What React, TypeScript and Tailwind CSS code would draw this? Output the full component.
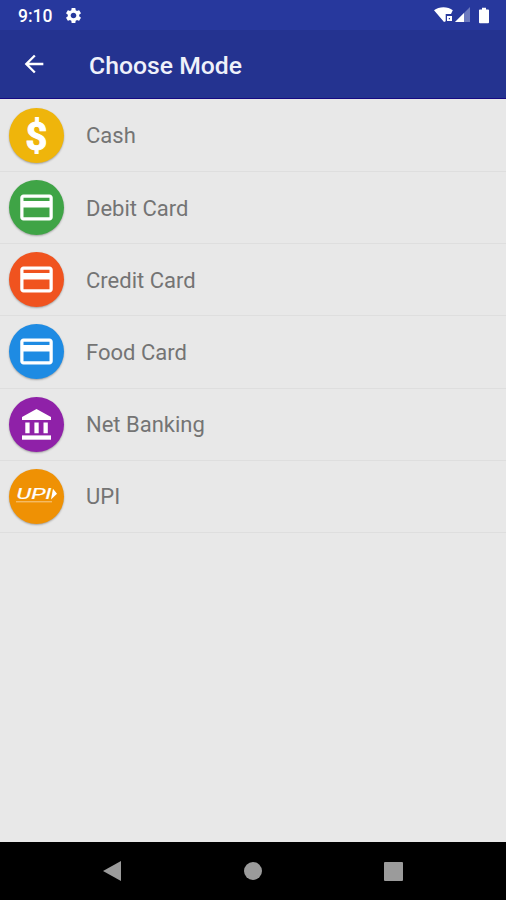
import type { ReactNode } from "react";
import { MdArrowBack, MdPayment, MdSettings } from "react-icons/md";

type Mode = {
  name: string;
  color: string;
  icon: ReactNode;
};

const BankIcon = () => (
  <svg width="29" height="31" viewBox="0 0 29 31" fill="currentColor">
    <path d="M14.5 0 29 8v3H0V8z" />
    <path d="M3.3 13.4h4.3v10.8H3.3zM12.4 13.4h4.3v10.8h-4.3zM21.5 13.4h4.3v10.8h-4.3z" />
    <path d="M0 26.4h29v4.3H0z" />
  </svg>
);

const UpiLogo = () => (
  <svg width="42" height="18" viewBox="0 0 42 18" fill="#fff">
    <text
      x="0.5"
      y="12"
      fontFamily="Roboto, sans-serif"
      fontStyle="italic"
      fontWeight="400"
      fontSize="14"
      textLength="35"
      lengthAdjust="spacingAndGlyphs"
      stroke="#fff"
      strokeWidth="0.2"
    >
      UPI
    </text>
    <path d="M37 1.8 41 6.8 35 12.4z" />
    <path d="M0 14.8h36" stroke="#fff" strokeWidth="0.9" opacity="0.6" />
  </svg>
);

const modes: Mode[] = [
  {
    name: "Cash",
    color: "bg-[#efb50b]",
    icon: (
      <span className="font-bold text-[38px] leading-none pt-[3px] [-webkit-text-stroke:1px_white]">
        $
      </span>
    ),
  },
  { name: "Debit Card", color: "bg-[#3fa446]", icon: <MdPayment size={39} /> },
  { name: "Credit Card", color: "bg-[#f0531f]", icon: <MdPayment size={39} /> },
  { name: "Food Card", color: "bg-[#1e8be3]", icon: <MdPayment size={39} /> },
  { name: "Net Banking", color: "bg-[#8f21a8]", icon: <BankIcon /> },
  { name: "UPI", color: "bg-[#ef9104]", icon: <UpiLogo /> },
];

function StatusBar() {
  return (
    <div className="h-[30px] shrink-0 bg-[#27389d] flex items-center pl-[18px] pr-[17px] text-white">
      <span className="pt-[3px] text-[17.5px] font-medium leading-none">9:10</span>
      <MdSettings size={19} className="ml-[12px] mt-px" />

      <div className="ml-auto flex items-center">
        {/* Wifi */}
        <svg width="20" height="16" viewBox="0 0 20 16" fill="#fff">
          <path d="M0 3.2C5-.9 14-.9 18.8 3.2L17 7h-5.3v7.2L10 15z" />
          <path d="M13 9h5v5h-5zm1.8 2v1.2H16V11z" fillRule="evenodd" />
        </svg>
        {/* Sinyal */}
        <svg width="15" height="16" viewBox="0 0 15 16" className="ml-[1px]">
          <path d="M15 0v15H0z" fill="#6c79be" />
          <path d="M9 6v9H0z" fill="#fff" />
        </svg>
        {/* Baterai */}
        <svg width="10" height="17" viewBox="0 0 11 17" fill="#fff" className="ml-[9px]">
          <path d="M3.3 0h4.4v1.8H10q1 0 1 1V16q0 1-1 1H1q-1 0-1-1V2.8q0-1 1-1h2.3z" />
        </svg>
      </div>
    </div>
  );
}

function AppBar() {
  return (
    <header className="h-[69px] shrink-0 bg-[#243390] border-b border-[#160a82] flex items-center pl-[20px] text-white">
      <button className="block" aria-label="Back">
        <MdArrowBack size={28} />
      </button>
      <h1 className="ml-[41px] mt-[5px] text-[24.75px] font-medium leading-none text-[#eff1fa]">
        Choose Mode
      </h1>
    </header>
  );
}

function ModeRow({ mode }: { mode: Mode }) {
  return (
    <li className="h-[72.2px] flex items-center pl-[9px] border-b border-[#dedede]">
      <div
        className={`size-[55px] shrink-0 rounded-full flex items-center justify-center text-white shadow-[0_1px_2px_rgba(0,0,0,0.3)] ${mode.color}`}
      >
        {mode.icon}
      </div>
      <span className="ml-[22px] pt-[2px] text-[22px] leading-none text-[#747474]">{mode.name}</span>
    </li>
  );
}

function NavBar() {
  return (
    <nav className="h-[58px] shrink-0 bg-black flex items-center justify-between pl-[103px] pr-[103px]">
      <svg width="19" height="20" viewBox="0 0 19 20" fill="#9b9b9b">
        <path d="M18 0v20L0 10z" />
      </svg>
      <div className="size-[18px] rounded-full bg-[#9b9b9b]" />
      <div className="size-[19px] rounded-[1px] bg-[#9b9b9b]" />
    </nav>
  );
}

export default function App() {
  return (
    <div className="w-full h-screen flex flex-col overflow-hidden bg-[#e8e8e8] font-[Roboto,sans-serif]">
      <StatusBar />
      <AppBar />
      <ul className="flex-1 pt-[0.8px]">
        {modes.map((mode) => (
          <ModeRow key={mode.name} mode={mode} />
        ))}
      </ul>
      <NavBar />
    </div>
  );
}
